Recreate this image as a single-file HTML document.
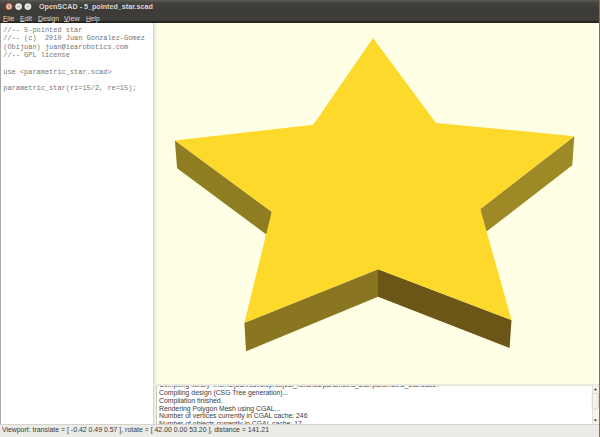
<!DOCTYPE html>
<html><head><meta charset="utf-8">
<style>
html,body{margin:0;padding:0;width:600px;height:437px;overflow:hidden;background:#efedea;}
*{box-sizing:border-box;}
.abs{position:absolute;}
#title{left:0;top:0;width:600px;height:23px;background:linear-gradient(#5c5b56 0px,#4a4944 2px,#403f3b 5px,#3c3b37 12px,#3f3e3a 20px,#2c2b27 21.5px,#1f1e1a 23px);}
#ttext{left:38.5px;top:2.65px;font:bold 7.5px/7.5px "Liberation Sans",sans-serif;color:#dcd8d0;white-space:pre;transform:scaleX(0.956);transform-origin:0 0;}
#menu{left:0;top:0;font:7.5px/7.5px "Liberation Sans",sans-serif;color:#d6d2ca;white-space:pre;}
#menu u{text-decoration:none;border-bottom:0.7px solid #b8b4ac;display:inline-block;line-height:5.4px;}
#menu span{position:absolute;top:14.9px;transform-origin:0 0;}
#editor{left:0;top:23px;width:153px;height:401px;background:#fff;border-left:1px solid #a9a8a4;}
#code{left:3.3px;top:26px;font:6.95px/8.33px "Liberation Mono",monospace;color:#767676;white-space:pre;}
#split{left:153px;top:23px;width:4px;height:401px;background:linear-gradient(90deg,#d9d9d7 0px,#d9d9d7 1px,#e8e7df 1px,#eeede2 2px,#f7f6e3 3px,#fdfde5 4px);}
#view{left:157px;top:23px;width:442px;height:360.5px;background:#ffffe5;overflow:hidden;}
#hsplit{left:153px;top:383.5px;width:446px;height:2.5px;background:linear-gradient(#ecebe0,#e6e5e0);}
#console{left:156px;top:385.5px;width:443px;height:38.5px;background:#fff;border-left:1px solid #cfcdc8;overflow:hidden;}
#ctext{left:2px;top:-4.3px;font:6.85px/7.8px "Liberation Sans",sans-serif;color:#3a3a3a;white-space:pre;}
#sb{left:591.5px;top:385.5px;width:7px;height:38.5px;background:#f5f4f1;border-left:0.5px solid #e2e0db;}
#status{left:0;top:424px;width:600px;height:13px;background:#edebe7;border-top:1px solid #d5d3ce;}
#stext{left:1.9px;top:426.2px;font:6.93px "Liberation Sans",sans-serif;color:#3a3a3a;white-space:pre;}
#rborder{left:598.5px;top:0;width:1.5px;height:437px;background:#7b7261;}
#rlight{left:597px;top:23px;width:1.5px;height:360px;background:#fffff3;}
</style></head><body>
<div id="title" class="abs"></div>
<svg class="abs" style="left:0;top:0" width="40" height="14" viewBox="0 0 40 14">
 <circle cx="9" cy="6.6" r="3.1" fill="#eec4b4" stroke="#d65f4b" stroke-width="1"/>
 <path d="M8.2 5.8 L9.8 7.4 M9.8 5.8 L8.2 7.4" stroke="#7a4a3c" stroke-width="0.7"/>
 <circle cx="18.6" cy="6.6" r="3.4" fill="#e8e6e1"/>
 <path d="M17.4 6.1 L18.6 7.3 L19.8 6.1" stroke="#807e77" stroke-width="0.8" fill="none"/>
 <circle cx="27.9" cy="6.6" r="3.4" fill="#e8e6e1"/>
 <path d="M26.7 7.2 L27.9 6 L29.1 7.2" stroke="#807e77" stroke-width="0.8" fill="none"/>
</svg>
<div id="ttext" class="abs">OpenSCAD - 5_pointed_star.scad</div>
<div id="menu" class="abs"><span style="left:2.5px;transform:scaleX(0.95)"><u>F</u>ile</span><span style="left:20px;transform:scaleX(0.93)"><u>E</u>dit</span><span style="left:38px;transform:scaleX(0.9)"><u>D</u>esign</span><span style="left:64.2px;transform:scaleX(0.96)"><u>V</u>iew</span><span style="left:85.8px;transform:scaleX(0.89)"><u>H</u>elp</span></div>
<div id="editor" class="abs"></div>
<div id="code" class="abs">//-- 5-pointed star
//-- (c)  2010 Juan Gonzalez-Gomez
(Obijuan) juan@iearobotics.com
//-- GPL license

use &lt;parametric_star.scad&gt;

parametric_star(ri=15/2, re=15);</div>
<div id="split" class="abs"></div>
<div id="view" class="abs">
<svg width="442" height="361" viewBox="157 23 442 361" style="position:absolute;left:0;top:0">
<polygon points="174.9,140.5 271.7,211.7 272.7,239.2 177.1,168.3" fill="#8f7d22"/>
<polygon points="574.3,136.2 480.3,209.1 479.3,237.1 572.3,165.3" fill="#9d8a27"/>
<polygon points="244.4,322.8 378,269.2 378,296.8 246,351.3" fill="#8a7520"/>
<polygon points="378,269.2 511.5,320 509.6,348 378,296.8" fill="#6b5618"/>
<polygon points="373,38 436,123 574.3,136.2 480.3,209.1 511.5,320 378,269.2 244.4,322.8 271.7,211.7 174.9,140.5 313.3,124.7" fill="#fdd92c"/>
</svg>
</div>
<div id="hsplit" class="abs"></div>
<div id="console" class="abs"><div id="ctext" class="abs">Compiling library '/home/juan/develop/object_libraries/parametric_star/parametric_star.scad'.
Compiling design (CSG Tree generation)...
Compilation finished.
Rendering Polygon Mesh using CGAL...
Number of vertices currently in CGAL cache: 246
Number of objects currently in CGAL cache: 17</div></div>
<div id="sb" class="abs"></div>
<svg class="abs" style="left:590px;top:385px" width="9" height="40" viewBox="0 0 9 40">
 <path d="M3.6 5.2 L5.4 3.2 L7.2 5.2 Z" fill="#3d3c38"/>
 <rect x="2.2" y="8" width="6" height="16" rx="2.5" fill="#f4f3ef" stroke="#c9c7c0" stroke-width="0.7"/>
 <path d="M3.6 34.4 L5.4 36.4 L7.2 34.4 Z" fill="#3d3c38"/>
</svg>
<div id="status" class="abs"></div>
<div id="stext" class="abs">Viewport: translate = [ -0.42 0.49 0.57 ], rotate = [ 42.00 0.00 53.20 ], distance = 141.21</div>
<div id="rlight" class="abs"></div><div id="rborder" class="abs"></div>
</body></html>
